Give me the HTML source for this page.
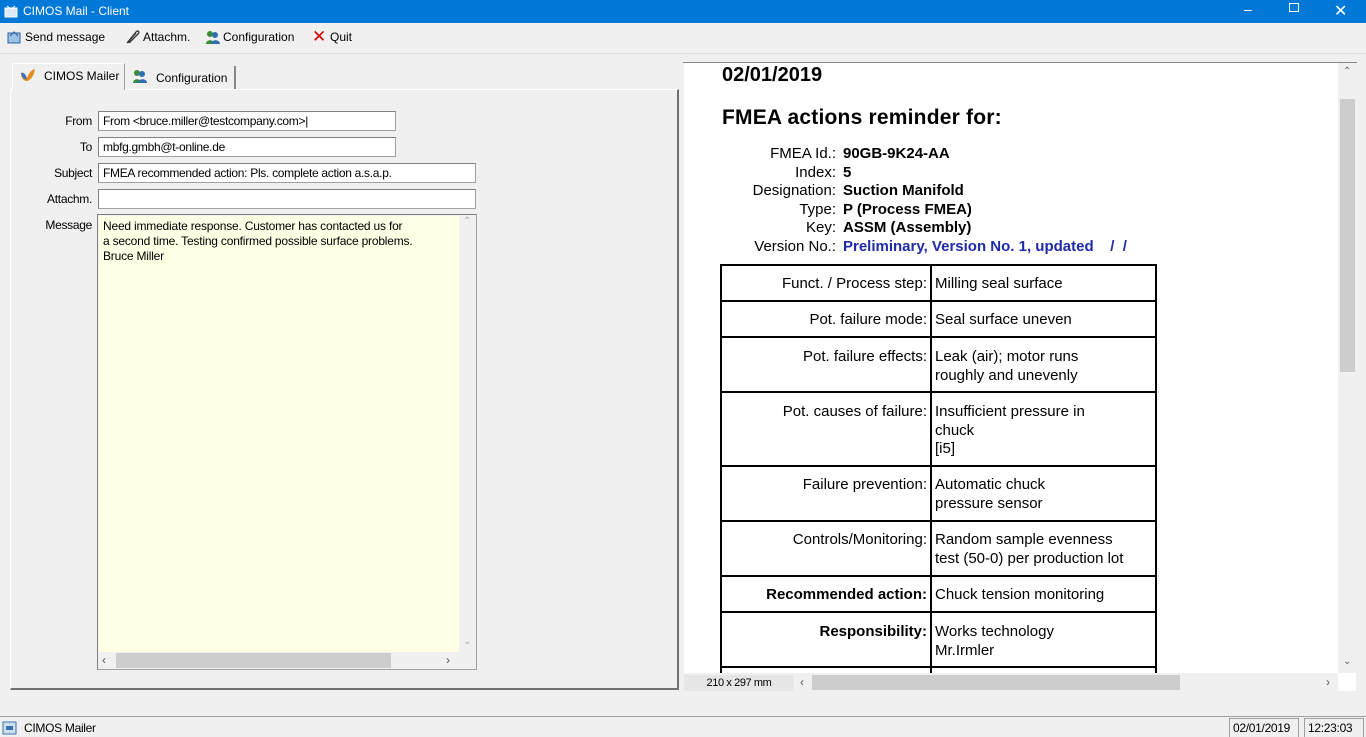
<!DOCTYPE html>
<html><head><meta charset="utf-8"><style>
*{margin:0;padding:0;box-sizing:border-box}
body{width:1366px;height:737px;background:#f0f0f0;font-family:"Liberation Sans",Arial,sans-serif;position:relative;overflow:hidden;font-size:12px;color:#000}
.a{position:absolute;white-space:nowrap}
.n{font-size:12px;letter-spacing:-0.3px}
.inp{position:absolute;background:#fff;border:1px solid #a0a0a0;border-top-color:#808080;border-left-color:#808080;padding:2px 4px;font-size:12px;letter-spacing:-0.3px}
.lbl{position:absolute;width:80px;text-align:right;left:12px;font-size:12px;letter-spacing:-0.3px}
.hl{position:absolute;height:2px;background:#000;left:720px;width:437px}
.vl{position:absolute;width:2px;background:#000;top:264px;height:410px}
.t{position:absolute;font-size:15px;line-height:18.5px}
</style></head><body>
<div class="a" style="left:0;top:0;width:1366px;height:23px;background:#0078d7"></div>
<svg class="a" style="left:4px;top:4px" width="14" height="14"><rect x="1" y="4" width="12" height="9" fill="#dce8f4" stroke="#fff"/><path d="M3 2l4 3 4-3" stroke="#fff" fill="none"/></svg>
<div class="a" style="left:23px;top:4px;color:#fff;font-size:12px">CIMOS Mail - Client</div>
<div class="a" style="left:1244px;top:1px;color:#fff;font-size:14px">&#8211;</div>
<div class="a" style="left:1289px;top:3px;width:10px;height:9px;border:1px solid #fff"></div>
<div class="a" style="left:1334px;top:1px;color:#fff;font-size:16px">&#10005;</div>
<svg class="a" style="left:6px;top:29px" width="16" height="16"><rect x="2" y="4" width="12" height="10" fill="#9cc3e6" stroke="#2b5f9e"/><path d="M4 7l4-4 4 4" stroke="#2b5f9e" fill="none"/></svg>
<div class="a" style="left:25px;top:30px">Send message</div>
<svg class="a" style="left:124px;top:29px" width="18" height="16"><path d="M3 14L12 3c2-2 4 0 2 2L6 13c-1 1-2 0-1-1l7-8" stroke="#333" fill="none" stroke-width="1.3"/></svg>
<div class="a" style="left:143px;top:30px">Attachm.</div>
<svg class="a" style="left:205px;top:29px" width="16" height="16"><circle cx="5" cy="5" r="3" fill="#3a8a3a"/><circle cx="10" cy="6" r="3" fill="#2f6fb0"/><path d="M1 15c0-5 8-5 8 0z" fill="#3a8a3a"/><path d="M6 15c0-5 9-5 9 0z" fill="#2f6fb0"/></svg>
<div class="a" style="left:223px;top:30px">Configuration</div>
<div class="a" style="left:312px;top:27px;color:#c00;font-size:17px">&#10005;</div>
<div class="a" style="left:330px;top:30px">Quit</div>
<div class="a" style="left:0;top:53px;width:1366px;height:1px;background:#e0e0e0"></div>
<div class="a" style="left:12px;top:63px;width:113px;height:27px;background:#f0f0f0;border:1px solid #fff;border-right:1px solid #a0a0a0;border-bottom:none;z-index:2"></div>
<svg class="a" style="left:19px;top:67px;z-index:3" width="18" height="16"><path d="M2 6c3-1 5 2 6 6 1-5 4-9 8-10-1 5-3 11-8 12-4 0-6-4-6-8z" fill="#e88a1a"/><path d="M2 6c3-1 5 2 6 6-2 1-5-1-6-6z" fill="#3a6fc0"/></svg>
<div class="a" style="left:44px;top:69px;z-index:3">CIMOS Mailer</div>
<div class="a" style="left:125px;top:66px;width:111px;height:23px;border-right:2px solid #888"></div>
<svg class="a" style="left:132px;top:68px" width="16" height="16"><circle cx="5" cy="5" r="3" fill="#3a8a3a"/><circle cx="10" cy="6" r="3" fill="#2f6fb0"/><path d="M1 15c0-5 8-5 8 0z" fill="#3a8a3a"/><path d="M6 15c0-5 9-5 9 0z" fill="#2f6fb0"/></svg>
<div class="a" style="left:156px;top:71px">Configuration</div>
<div class="a" style="left:10px;top:89px;width:669px;height:601px;border:1px solid #fff;border-right:2px solid #707070;border-bottom:2px solid #707070"></div>
<div class="lbl" style="top:114px">From</div>
<div class="inp" style="left:98px;top:111px;width:298px;height:20px">From &lt;bruce.miller@testcompany.com&gt;|</div>
<div class="lbl" style="top:140px">To</div>
<div class="inp" style="left:98px;top:137px;width:298px;height:20px">mbfg.gmbh@t-online.de</div>
<div class="lbl" style="top:166px">Subject</div>
<div class="inp" style="left:98px;top:163px;width:378px;height:20px">FMEA recommended action: Pls. complete action a.s.a.p.</div>
<div class="lbl" style="top:192px">Attachm.</div>
<div class="inp" style="left:98px;top:189px;width:378px;height:20px"></div>
<div class="lbl" style="top:218px">Message</div>
<div class="a" style="left:97px;top:214px;width:380px;height:456px;background:#f0f0f0;border:1px solid #a0a0a0;border-top-color:#808080;border-left-color:#808080"></div>
<div class="a n" style="left:99px;top:216px;width:360px;height:436px;background:#ffffe6;padding:3px 4px;line-height:15px;white-space:normal;letter-spacing:-0.2px">Need immediate response. Customer has contacted us for<br>a second time. Testing confirmed possible surface problems.<br>Bruce Miller</div>
<div class="a" style="left:463px;top:216px;color:#aaa;font-size:10px">&#8963;</div>
<div class="a" style="left:463px;top:636px;color:#aaa;font-size:10px">&#8964;</div>
<div class="a" style="left:116px;top:653px;width:275px;height:15px;background:#cdcdcd"></div>
<div class="a" style="left:102px;top:653px;font-size:12px;color:#555">&#8249;</div>
<div class="a" style="left:446px;top:653px;font-size:12px;color:#555">&#8250;</div>
<div class="a" style="left:683px;top:62px;width:674px;height:1px;background:#888"></div>
<div class="a" style="left:684px;top:63px;width:654px;height:610px;background:#fff"></div>
<div class="a" style="left:1338px;top:63px;width:18px;height:610px;background:#f0f0f0"></div>
<div class="a" style="left:1340px;top:99px;width:15px;height:273px;background:#cdcdcd"></div>
<div class="a" style="left:1343px;top:66px;font-size:10px;color:#666">&#8963;</div>
<div class="a" style="left:1343px;top:656px;font-size:10px;color:#666">&#8964;</div>
<div class="a" style="left:684px;top:675px;width:110px;height:16px;background:#e6e6e6;font-size:11px;letter-spacing:-0.4px;text-align:center;line-height:16px">210 x 297 mm</div>
<div class="a" style="left:800px;top:675px;font-size:12px;color:#555">&#8249;</div>
<div class="a" style="left:812px;top:675px;width:368px;height:15px;background:#cdcdcd"></div>
<div class="a" style="left:1326px;top:675px;font-size:12px;color:#555">&#8250;</div>
<div class="a" style="left:1338px;top:673px;width:18px;height:18px;background:#fff"></div>
<div class="a" style="left:722px;top:64px;font-size:20px;font-weight:bold">02/01/2019</div>
<div class="a" style="left:722px;top:106px;font-size:21px;font-weight:bold;letter-spacing:0.2px">FMEA actions reminder for:</div>
<div class="a" style="left:700px;top:145px;width:136px;text-align:right;font-size:15px;line-height:18.5px">FMEA Id.:<br>Index:<br>Designation:<br>Type:<br>Key:<br>Version No.:</div>
<div class="a" style="left:843px;top:145px;font-size:15px;line-height:18.5px;font-weight:bold">90GB-9K24-AA<br>5<br>Suction Manifold<br>P (Process FMEA)<br>ASSM (Assembly)<br><span style="color:#1f2aa8">Preliminary, Version No. 1, updated &nbsp;&nbsp;&nbsp;/ &nbsp;/</span></div>
<div style="position:absolute;left:0;top:0;width:1338px;height:673px;overflow:hidden">
<div class="hl" style="top:264px"></div><div class="hl" style="top:300px"></div><div class="hl" style="top:336px"></div><div class="hl" style="top:391px"></div><div class="hl" style="top:465px"></div><div class="hl" style="top:520px"></div><div class="hl" style="top:575px"></div><div class="hl" style="top:611px"></div><div class="hl" style="top:666px"></div>
<div class="vl" style="left:720px"></div><div class="vl" style="left:930px"></div><div class="vl" style="left:1155px"></div>
<div class="t" style="left:722px;width:205px;text-align:right;top:275px">Funct. / Process step:</div>
<div class="t" style="left:935px;top:275px">Milling seal surface</div>
<div class="t" style="left:722px;width:205px;text-align:right;top:311px">Pot. failure mode:</div>
<div class="t" style="left:935px;top:311px">Seal surface uneven</div>
<div class="t" style="left:722px;width:205px;text-align:right;top:348px">Pot. failure effects:</div>
<div class="t" style="left:935px;top:348px">Leak (air); motor runs<br>roughly and unevenly</div>
<div class="t" style="left:722px;width:205px;text-align:right;top:403px">Pot. causes of failure:</div>
<div class="t" style="left:935px;top:403px">Insufficient pressure in<br>chuck<br>[i5]</div>
<div class="t" style="left:722px;width:205px;text-align:right;top:476px">Failure prevention:</div>
<div class="t" style="left:935px;top:476px">Automatic chuck<br>pressure sensor</div>
<div class="t" style="left:722px;width:205px;text-align:right;top:531px">Controls/Monitoring:</div>
<div class="t" style="left:935px;top:531px">Random sample evenness<br>test (50-0) per production lot</div>
<div class="t" style="left:722px;width:205px;text-align:right;top:586px;font-weight:bold">Recommended action:</div>
<div class="t" style="left:935px;top:586px">Chuck tension monitoring</div>
<div class="t" style="left:722px;width:205px;text-align:right;top:623px;font-weight:bold">Responsibility:</div>
<div class="t" style="left:935px;top:623px">Works technology<br>Mr.Irmler</div>
</div>
<div class="a" style="left:0;top:716px;width:1366px;height:1px;background:#a0a0a0"></div>
<svg class="a" style="left:2px;top:719px" width="16" height="16"><rect x="1" y="3" width="13" height="12" fill="#cfe0f2" stroke="#3a6fb0"/><rect x="4" y="7" width="7" height="4" fill="#3a6fb0"/></svg>
<div class="a n" style="left:24px;top:721px">CIMOS Mailer</div>
<div class="a" style="left:1229px;top:718px;width:70px;height:19px;border:1px solid #a0a0a0;border-bottom:none;padding:2px 3px"><span class="n">02/01/2019</span></div>
<div class="a" style="left:1304px;top:718px;width:60px;height:19px;border:1px solid #a0a0a0;border-bottom:none;padding:2px 3px"><span class="n">12:23:03</span></div>
</body></html>
